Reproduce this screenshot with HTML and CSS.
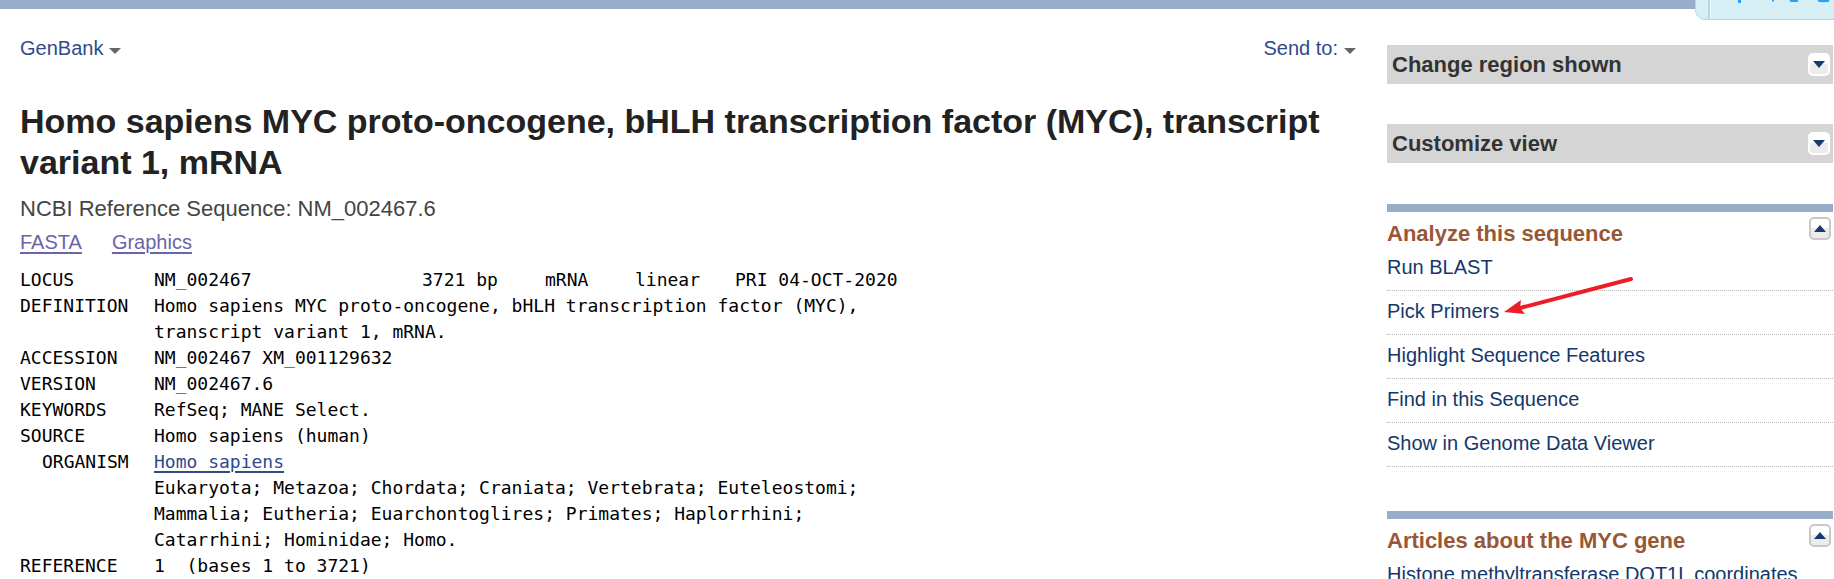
FILE: index.html
```html
<!DOCTYPE html>
<html lang="en">
<head>
<meta charset="utf-8">
<title>Homo sapiens MYC proto-oncogene - Nucleotide</title>
<link rel="stylesheet" href="styles.css">
</head>
<body>
<svg class="toolbar" viewBox="0 0 139 20" aria-hidden="true">
  <path class="toolbar-body" d="M.5-10V10a9.500 9.500 0 0 0 9.500 9.500H150V-10z"/>
  <path class="toolbar-edge" d="M14 0v19"/>
  <path class="toolbar-shine" d="M15.500 0v19"/>
  <path class="toolbar-mark" d="M44.500 0v3M77 0h2M95 0q4 1 8 0M123 0q6 1.500 11 0"/>
</svg>
<div class="page">
  <main class="main">
    <div class="display-bar">
      <button class="menu" type="button">GenBank<span class="caret"></span></button>
      <button class="menu" type="button">Send to:<span class="caret"></span></button>
    </div>
    <h1 class="title">Homo sapiens MYC proto-oncogene, bHLH transcription factor (MYC), transcript variant 1, mRNA</h1>
    <p class="refseq">NCBI Reference Sequence: NM_002467.6</p>
    <nav class="formats"><a href="#fasta">FASTA</a><a href="#graphics">Graphics</a></nav>
    <dl class="record">
      <dt>LOCUS</dt><dd class="locus"><span>NM_002467</span><span>3721 bp</span><span>mRNA</span><span>linear</span><span>PRI 04-OCT-2020</span></dd>
      <dt>DEFINITION</dt><dd>Homo sapiens MYC proto-oncogene, bHLH transcription factor (MYC),<br>transcript variant 1, mRNA.</dd>
      <dt>ACCESSION</dt><dd>NM_002467 XM_001129632</dd>
      <dt>VERSION</dt><dd>NM_002467.6</dd>
      <dt>KEYWORDS</dt><dd>RefSeq; MANE Select.</dd>
      <dt>SOURCE</dt><dd>Homo sapiens (human)</dd>
      <dt class="sub">ORGANISM</dt><dd><a href="#organism">Homo sapiens</a><br>Eukaryota; Metazoa; Chordata; Craniata; Vertebrata; Euteleostomi;<br>Mammalia; Eutheria; Euarchontoglires; Primates; Haplorrhini;<br>Catarrhini; Hominidae; Homo.</dd>
      <dt>REFERENCE</dt><dd>1&nbsp; (bases 1 to 3721)</dd>
    </dl>
  </main>
  <aside class="side">
    <section class="option"><h2>Change region shown</h2><button class="toggle" type="button" aria-label="Expand Change region shown"><svg viewBox="0 0 12 7"><path d="M0 0h12L6 7z"/></svg></button></section>
    <section class="option"><h2>Customize view</h2><button class="toggle" type="button" aria-label="Expand Customize view"><svg viewBox="0 0 12 7"><path d="M0 0h12L6 7z"/></svg></button></section>
    <section class="portlet">
      <div class="portlet-head"><h2>Analyze this sequence</h2><button class="toggle" type="button" aria-label="Collapse Analyze this sequence"><svg viewBox="0 0 12 7"><path d="M0 7h12L6 0z"/></svg></button></div>
      <ul class="links">
        <li><a href="#blast">Run BLAST</a></li>
        <li><a href="#primers">Pick Primers</a><svg class="arrow" viewBox="0 0 130 40" aria-hidden="true"><path class="arrow-shaft" d="M127 3L16 32"/><path class="arrow-head" d="M0 36L17 24L16 32L21 38z"/></svg></li>
        <li><a href="#features">Highlight Sequence Features</a></li>
        <li><a href="#find">Find in this Sequence</a></li>
        <li><a href="#viewer">Show in Genome Data Viewer</a></li>
      </ul>
    </section>
    <section class="portlet">
      <div class="portlet-head"><h2>Articles about the MYC gene</h2><button class="toggle" type="button" aria-label="Collapse Articles about the MYC gene"><svg viewBox="0 0 12 7"><path d="M0 7h12L6 0z"/></svg></button></div>
      <ul class="links">
        <li><a href="#article">Histone methyltransferase DOT1L coordinates</a></li>
      </ul>
    </section>
  </aside>
</div>
</body>
</html>
```
FILE: styles.css
```css
* { box-sizing: border-box; }
html { height: 100%; overflow: hidden; }
body {
  margin: 0;
  height: 100%;
  overflow: hidden;
  border-top: 9px solid #98aec8;
  background: #fff;
  color: #222;
  font: 20px/24px "Liberation Sans", Arial, sans-serif;
}
h1, h2, p, ul, dl, dd { margin: 0; padding: 0; }
button { font: inherit; cursor: pointer; }

.toolbar { position: absolute; top: 0; right: 0; width: 139px; height: 20px; }
.toolbar-body { fill: #d6eff5; stroke: #a9dce6; }
.toolbar-edge { fill: none; stroke: #a9dce6; stroke-width: 2; }
.toolbar-shine { fill: none; stroke: #f3fbfd; }
.toolbar-mark { fill: none; stroke: #2a9df4; stroke-width: 3; }

.page {
  display: grid;
  grid-template-columns: minmax(0, 1fr) 446px;
  gap: 31px;
  padding: 0 1px 0 20px;
}

.display-bar { display: flex; justify-content: space-between; padding-top: 27px; }
.menu {
  display: flex;
  align-items: center;
  gap: 6px;
  padding: 0;
  border: 0;
  background: none;
  color: #2f4a8b;
}
.caret {
  margin-top: 6px;
  border: 6px solid transparent;
  border-top-color: #666;
  border-bottom: 0;
}
.title { margin-top: 41px; font-size: 34px; line-height: 41px; }
.refseq { margin-top: 13px; color: #444; font-size: 22px; line-height: 26px; }
.formats { display: flex; gap: 30px; margin-top: 8px; }
.formats a { color: #6a64a8; text-underline-offset: 3px; text-decoration-thickness: 2px; }

.record {
  display: grid;
  grid-template-columns: 134px minmax(0, 1fr);
  margin-top: 13px;
  color: #000;
  font: 18px/26px "DejaVu Sans Mono", monospace;
  white-space: nowrap;
}
.record .sub { padding-left: 22px; }
.record a { color: #2f4a8b; text-underline-offset: 3px; text-decoration-thickness: 2px; }
.locus { display: flex; }
.locus span:nth-child(1) { width: 268px; }
.locus span:nth-child(2) { width: 123px; }
.locus span:nth-child(3) { width: 90px; }
.locus span:nth-child(4) { width: 100px; }

.side { padding-top: 36px; }
.side h2 { font-size: 22px; line-height: 26px; }
.option {
  display: flex;
  align-items: center;
  justify-content: space-between;
  height: 39px;
  margin-bottom: 40px;
  padding: 0 3px 0 5px;
  background: #d5d5d5;
  color: #333;
}
.toggle {
  display: grid;
  place-items: center;
  width: 22px;
  height: 23px;
  padding: 0;
  border: 2px solid #c8c8c8;
  border-radius: 5px;
  background: linear-gradient(#fff 45%, #ececec 45%);
}
.option .toggle { border-color: #fff; }
.toggle svg { width: 12px; height: 7px; fill: #17396f; }
.option + .portlet { margin-top: 41px; }
.portlet { margin-bottom: 44px; border-top: 8px solid #98aec8; }
.portlet-head {
  display: flex;
  justify-content: space-between;
  align-items: flex-start;
  padding: 5px 2px 0 0;
}
.portlet h2 { padding-top: 4px; color: #985735; }
.links { list-style: none; }
.links li { position: relative; height: 44px; padding-top: 8px; border-bottom: 1px dotted #bbb; }
.links a { color: #14376c; text-decoration: none; }
.arrow { position: absolute; left: 117px; top: -15px; width: 130px; height: 40px; }
.arrow-shaft { fill: none; stroke: #ee1c25; stroke-width: 4; stroke-linecap: round; }
.arrow-head { fill: #ee1c25; }
```
